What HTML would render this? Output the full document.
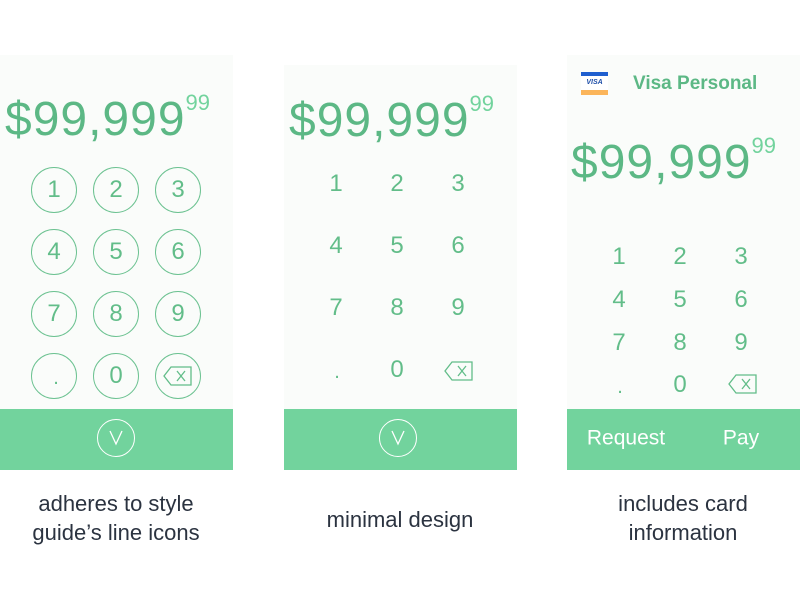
<!DOCTYPE html>
<html><head><meta charset="utf-8"><style>
*{margin:0;padding:0;box-sizing:border-box}
body{width:800px;height:600px;background:#fff;position:relative;overflow:hidden;font-family:"Liberation Sans",sans-serif}
.p{position:absolute;background:#fafcfa}
.bar{position:absolute;background:#72d39d}
.c{position:absolute;transform:translate(-50%,-50%);color:#62bd89;font-size:24px;line-height:1;white-space:nowrap}
.amt{position:absolute;color:#5cb885;font-size:48px;line-height:1;white-space:nowrap;letter-spacing:1px}
.amt sup{font-size:22px;color:#72d39d;vertical-align:top;position:relative;top:-4px;margin-left:0;letter-spacing:0}
.ring{position:absolute;width:46px;height:46px;border:1.5px solid #6cc291;border-radius:50%;transform:translate(-50%,-50%)}
.cap{position:absolute;transform:translate(-50%,-50%);color:#2b3340;font-size:22px;white-space:nowrap}
.w{color:#fff}
</style></head><body>
<div class="p" style="left:0;top:55px;width:233px;height:354px"></div>
<div class="bar" style="left:0;top:409px;width:233px;height:61px"></div>
<div class="p" style="left:284px;top:65px;width:233px;height:344px"></div>
<div class="bar" style="left:284px;top:409px;width:233px;height:61px"></div>
<div class="p" style="left:567px;top:55px;width:233px;height:354px"></div>
<div class="bar" style="left:567px;top:409px;width:233px;height:61px"></div>

<div class="amt" style="left:5px;top:96px">$99,999<sup>99</sup></div>
<div class="amt" style="left:289px;top:97px">$99,999<sup>99</sup></div>
<div class="amt" style="left:571px;top:139px">$99,999<sup>99</sup></div>

<div class="ring" style="left:54px;top:190px"></div><div class="ring" style="left:116px;top:190px"></div><div class="ring" style="left:178px;top:190px"></div>
<div class="ring" style="left:54px;top:252px"></div><div class="ring" style="left:116px;top:252px"></div><div class="ring" style="left:178px;top:252px"></div>
<div class="ring" style="left:54px;top:314px"></div><div class="ring" style="left:116px;top:314px"></div><div class="ring" style="left:178px;top:314px"></div>
<div class="ring" style="left:54px;top:376px"></div><div class="ring" style="left:116px;top:376px"></div><div class="ring" style="left:178px;top:376px"></div>
<div class="c" style="left:54px;top:190px">1</div><div class="c" style="left:116px;top:190px">2</div><div class="c" style="left:178px;top:190px">3</div>
<div class="c" style="left:54px;top:252px">4</div><div class="c" style="left:116px;top:252px">5</div><div class="c" style="left:178px;top:252px">6</div>
<div class="c" style="left:54px;top:314px">7</div><div class="c" style="left:116px;top:314px">8</div><div class="c" style="left:178px;top:314px">9</div>
<div class="c" style="left:56px;top:378px;font-size:20px">.</div><div class="c" style="left:116px;top:376px">0</div>
<svg style="position:absolute;left:163px;top:366px" width="30" height="20" viewBox="0 0 30 20"><path d="M8 1H28V19H8L1 10Z" fill="none" stroke="#62bd89" stroke-width="1.3"/><path d="M14 5L22 15M22 5L14 15" stroke="#62bd89" stroke-width="1.3"/></svg>
<div class="ring" style="left:116px;top:438px;width:38px;height:38px;border-color:#fff"></div>
<svg style="position:absolute;left:106px;top:428px" width="20" height="20"><path d="M4 3L10 16L16 3" fill="none" stroke="#fff" stroke-width="1.3"/></svg>

<div class="c" style="left:336px;top:184px">1</div><div class="c" style="left:397px;top:184px">2</div><div class="c" style="left:458px;top:184px">3</div>
<div class="c" style="left:336px;top:246px">4</div><div class="c" style="left:397px;top:246px">5</div><div class="c" style="left:458px;top:246px">6</div>
<div class="c" style="left:336px;top:308px">7</div><div class="c" style="left:397px;top:308px">8</div><div class="c" style="left:458px;top:308px">9</div>
<div class="c" style="left:337px;top:372px;font-size:20px">.</div><div class="c" style="left:397px;top:370px">0</div>
<svg style="position:absolute;left:444px;top:361px" width="30" height="20" viewBox="0 0 30 20"><path d="M8 1H28V19H8L1 10Z" fill="none" stroke="#62bd89" stroke-width="1.3"/><path d="M14 5L22 15M22 5L14 15" stroke="#62bd89" stroke-width="1.3"/></svg>
<div class="ring" style="left:398px;top:438px;width:38px;height:38px;border-color:#fff"></div>
<svg style="position:absolute;left:388px;top:428px" width="20" height="20"><path d="M4 3L10 16L16 3" fill="none" stroke="#fff" stroke-width="1.3"/></svg>

<div style="position:absolute;left:581px;top:72px;width:27px;height:23px;background:#fff">
<div style="height:4px;background:#1f5fcf"></div>
<div style="height:14px;font-size:7px;font-weight:bold;font-style:italic;color:#1f4fa8;text-align:center;line-height:14px">VISA</div>
<div style="height:5px;background:#fbb55a"></div></div>
<div style="position:absolute;left:633px;top:73px;color:#5cb885;font-size:19px;font-weight:bold">Visa Personal</div>
<div class="c" style="left:619px;top:257px">1</div><div class="c" style="left:680px;top:257px">2</div><div class="c" style="left:741px;top:257px">3</div>
<div class="c" style="left:619px;top:300px">4</div><div class="c" style="left:680px;top:300px">5</div><div class="c" style="left:741px;top:300px">6</div>
<div class="c" style="left:619px;top:343px">7</div><div class="c" style="left:680px;top:343px">8</div><div class="c" style="left:741px;top:343px">9</div>
<div class="c" style="left:620px;top:387px;font-size:20px">.</div><div class="c" style="left:680px;top:385px">0</div>
<svg style="position:absolute;left:728px;top:374px" width="30" height="20" viewBox="0 0 30 20"><path d="M8 1H28V19H8L1 10Z" fill="none" stroke="#62bd89" stroke-width="1.3"/><path d="M14 5L22 15M22 5L14 15" stroke="#62bd89" stroke-width="1.3"/></svg>
<div class="c w" style="left:626px;top:438px;font-size:21px">Request</div>
<div class="c w" style="left:741px;top:438px;font-size:21px">Pay</div>

<div class="cap" style="left:116px;top:504px">adheres to style</div>
<div class="cap" style="left:116px;top:533px">guide’s line icons</div>
<div class="cap" style="left:400px;top:520px">minimal design</div>
<div class="cap" style="left:683px;top:504px">includes card</div>
<div class="cap" style="left:683px;top:533px">information</div>
</body></html>
